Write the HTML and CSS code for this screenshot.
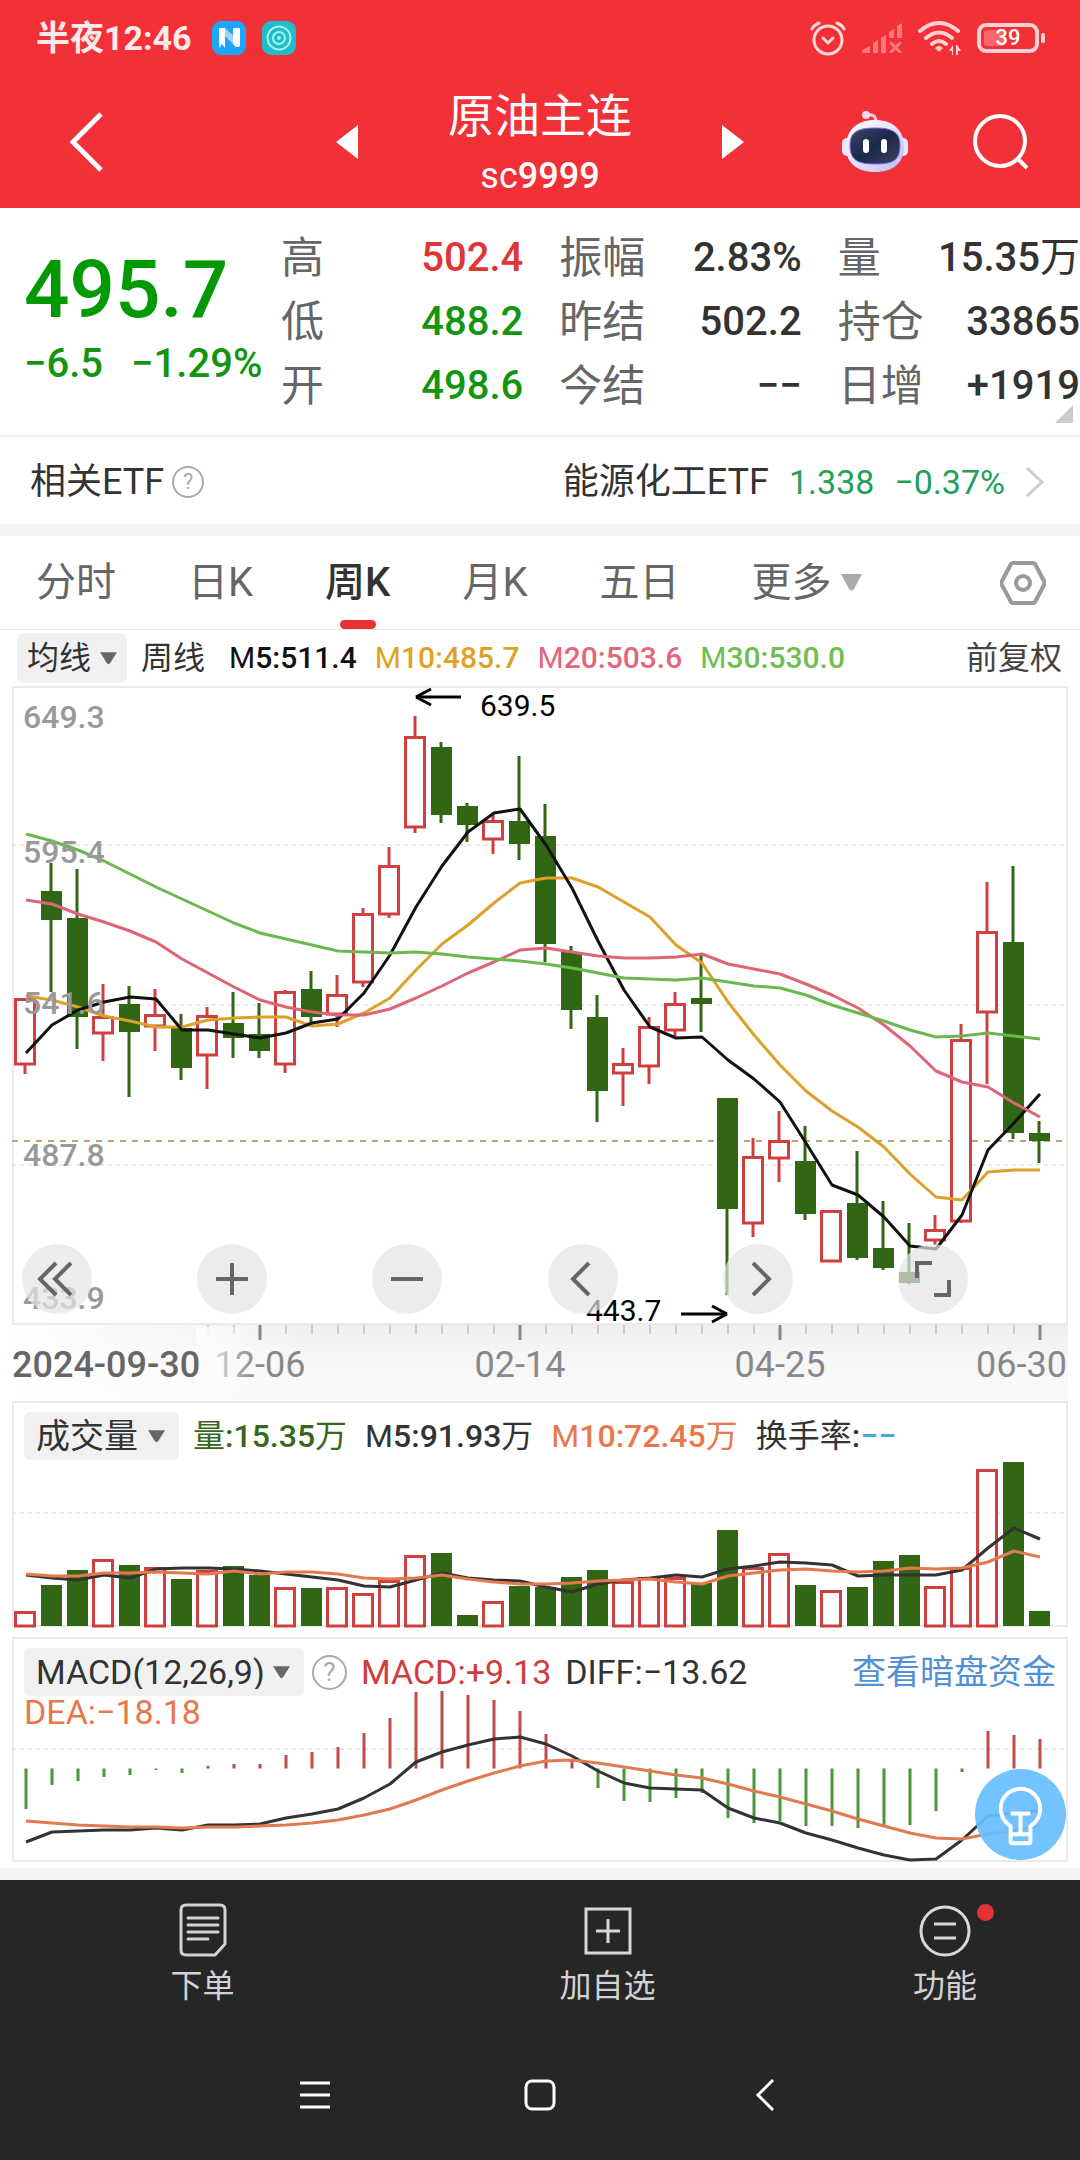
FILE: index.html
```html
<!DOCTYPE html>
<html lang="zh-CN">
<head>
<meta charset="utf-8">
<meta name="viewport" content="width=device-width, initial-scale=1">
<title>原油主连 sc9999</title>
<link rel="stylesheet" href="styles.css">
</head>
<body>
<header class="top">
  <div class="status">
    <span class="status-time">半夜12:46</span>
    <svg class="app-icon" viewBox="0 0 34 34" aria-hidden="true"><rect width="34" height="34" rx="9" fill="#1ba5fb"/><path d="M7 8q0-1 1-1h5v20l-3-4-3 4z" fill="#fff"/><path d="M13 7l15 14v3q-1 2-4 2L13 15z" fill="#9fd4fb"/><path d="M21 8q0-1 1-1h5q1 0 1 1v16q0 2-2 2-5 0-5-5z" fill="#fff"/></svg>
    <svg class="app-icon" viewBox="0 0 34 34" aria-hidden="true"><rect width="34" height="34" rx="9" fill="#20bccc"/><g fill="none" stroke="#a5f5ee" stroke-width="2"><circle cx="17" cy="17" r="11.500"/><circle cx="17" cy="17" r="6"/></g><circle cx="17" cy="17" r="2" fill="#a5f5ee"/></svg>
    <span class="spacer"></span>
    <svg class="alarm" viewBox="0 0 36 36" aria-hidden="true"><g fill="none" stroke="#ffd5d6" stroke-width="3" stroke-linecap="round" stroke-linejoin="round"><circle cx="18" cy="20" r="14"/><path d="M13 18l5 5 5-5M2 9q2-4 7-6M34 9q-2-4-7-6"/></g></svg>
    <svg class="signal" viewBox="0 0 40 30" aria-hidden="true"><g fill="#f8797d"><path d="M0 30v-3l8-4v7zM11 30V20l5-3v13zM19 30V15l5-3v18zM27 15V9l5-3v9zM35 15V3l5-3v15z"/></g><path d="M29 20l9 9m0-9l-9 9" stroke="#f8797d" stroke-width="3" stroke-linecap="round"/></svg>
    <svg class="wifi" viewBox="0 0 43 34" aria-hidden="true"><g fill="none" stroke="#ffd0d2" stroke-width="4" stroke-linecap="round"><path d="M2 10q19-16 38 0M8 17q13-11 26 0M14 23q7-6 14 0"/></g><path d="M17 27q4-4 8 0l-4 4z" fill="#ffd0d2"/><path d="M35 34V24l-4 6h3v4zM38 34V24h1l4 6h-3v4z" fill="#ffd0d2"/></svg>
    <span class="battery"><span class="battery-level"></span><span class="battery-text">39</span></span>
  </div>
  <div class="nav">
    <button class="icon-button nav-back" aria-label="返回"><svg width="34" height="60" viewBox="0 0 34 60"><path d="M31 2L3 30l28 28" fill="none" stroke="#fff" stroke-width="5"/></svg></button>
    <div class="nav-title">
      <button class="icon-button" aria-label="上一个"><svg width="22" height="34" viewBox="0 0 22 34"><path d="M22 0v34L0 17z" fill="#fff"/></svg></button>
      <h1 class="title">原油主连<span class="code"><span class="code-prefix">sc</span>9999</span></h1>
      <button class="icon-button" aria-label="下一个"><svg width="22" height="34" viewBox="0 0 22 34"><path d="M0 0v34l22-17z" fill="#fff"/></svg></button>
    </div>
    <div class="nav-actions">
      <button class="icon-button" aria-label="智能助手"><svg width="66" height="62" viewBox="0 0 66 62">
        <defs><linearGradient id="face" x1="0" y1="0" x2="1" y2="1"><stop offset="0" stop-color="#3c4668"/><stop offset=".5" stop-color="#1b2748"/><stop offset="1" stop-color="#3d4464"/></linearGradient><linearGradient id="shell" x1="0" y1="0" x2="1" y2="1"><stop offset="0" stop-color="#fff"/><stop offset=".5" stop-color="#e6e2fa"/><stop offset="1" stop-color="#b9bcf0"/></linearGradient></defs>
        <path d="M24 4q10-2 10 7" fill="none" stroke="#f8c9dc" stroke-width="3"/><circle cx="24" cy="4" r="4" fill="#f3ddec"/>
        <rect x="0" y="27" width="10" height="18" rx="5" fill="#e8e6fb"/><rect x="56" y="27" width="10" height="18" rx="5" fill="#e8e6fb"/>
        <path d="M33 9c18 0 29 10 29 27 0 16-11 25-29 25S4 52 4 36C4 19 15 9 33 9z" fill="url(#shell)"/>
        <path d="M33 17c17 0 25 4 25 17 0 15-6 19-25 19S8 48 8 34c0-13 8-17 25-17z" fill="url(#face)" stroke="#7a6bea"/>
        <rect x="21" y="28" width="6" height="14" rx="3" fill="#fff"/><rect x="39" y="28" width="6" height="14" rx="3" fill="#fff"/></svg></button>
      <button class="icon-button" aria-label="搜索"><svg width="58" height="58" viewBox="0 0 58 58"><g fill="none" stroke="#fff" stroke-width="4"><circle cx="28" cy="28" r="25"/><path d="M45 45l10 10"/></g></svg></button>
    </div>
  </div>
</header>

<main>
  <section class="quote">
    <div class="quote-main">
      <div class="price">495.7</div>
      <div class="change"><span>−6.5</span><span>−1.29%</span></div>
    </div>
    <dl class="stats">
      <div class="stat"><dt>高</dt><dd class="up">502.4</dd></div>
      <div class="stat"><dt>振幅</dt><dd>2.83%</dd></div>
      <div class="stat"><dt>量</dt><dd>15.35<span class="unit">万</span></dd></div>
      <div class="stat"><dt>低</dt><dd class="down">488.2</dd></div>
      <div class="stat"><dt>昨结</dt><dd>502.2</dd></div>
      <div class="stat"><dt>持仓</dt><dd>33865</dd></div>
      <div class="stat"><dt>开</dt><dd class="down">498.6</dd></div>
      <div class="stat"><dt>今结</dt><dd>−−</dd></div>
      <div class="stat"><dt>日增</dt><dd>+1919</dd></div>
    </dl>
    <svg class="quote-corner" width="18" height="18" viewBox="0 0 18 18" aria-hidden="true"><path d="M18 0v18H0z" fill="#ccc"/></svg>
  </section>

  <section class="etf">
    <span>相关ETF</span>
    <button class="icon-button help-small" aria-label="说明">?</button>
    <a class="etf-link" href="#etf">
      <span>能源化工ETF</span><span class="etf-value">1.338</span><span class="etf-value">−0.37%</span>
      <svg width="20" height="32" viewBox="0 0 20 32" aria-hidden="true"><path d="M2 2l15 14L2 30" fill="none" stroke="#ccc" stroke-width="3"/></svg>
    </a>
  </section>

  <nav class="tabs">
    <button class="tab">分时</button>
    <button class="tab">日K</button>
    <button class="tab tab-active">周K</button>
    <button class="tab">月K</button>
    <button class="tab">五日</button>
    <label class="tab tab-more"><select class="picker" aria-label="更多周期"><option>更多</option></select><svg width="21" height="17" viewBox="0 0 21 17" aria-hidden="true"><path d="M0 0h21l-8 15q-2 3-5 0z" fill="#aaa"/></svg></label>
    <button class="icon-button tab-settings" aria-label="设置"><svg width="46" height="44" viewBox="0 0 46 44"><g fill="none" stroke="#999" stroke-width="4" stroke-linejoin="round"><path d="M13 2h20q1 0 2 1l9 17q1 2 0 4l-9 17q-1 1-2 1H13q-1 0-2-1L2 24q-1-2 0-4l9-17q1-1 2-1z"/><circle cx="23" cy="22" r="7"/></g></svg></button>
  </nav>

  <div class="ma-row">
    <label class="chip chip-ma"><select class="picker" aria-label="主图指标"><option>均线</option></select><svg class="caret" viewBox="0 0 18 13" aria-hidden="true"><path d="M0 0h18l-7 11q-2 3-4 0z"/></svg></label>
    <span class="ma-period">周线</span>
    <span class="ma c-black"><span class="light">M</span>5:511.4</span>
    <span class="ma c-gold"><span class="light">M</span>10:485.7</span>
    <span class="ma c-pink"><span class="light">M</span>20:503.6</span>
    <span class="ma c-green"><span class="light">M</span>30:530.0</span>
    <button class="icon-button adjust">前复权</button>
  </div>

  <section class="charts">
    <div class="k-chart">
      <svg class="plot" id="kline" viewBox="12 686 1056 639" role="img" aria-label="周K线"></svg>
      <div class="controls">
        <button class="control" aria-label="快退"><svg viewBox="0 0 70 70"><path d="M34 19L18 35l16 16M49 19L33 35l16 16"/></svg></button>
        <button class="control" aria-label="放大"><svg viewBox="0 0 70 70"><path d="M19 35h32M35 19v32"/></svg></button>
        <button class="control" aria-label="缩小"><svg viewBox="0 0 70 70"><path d="M19 35h32"/></svg></button>
        <button class="control" aria-label="左移"><svg viewBox="0 0 70 70"><path d="M41 19L25 35l16 16"/></svg></button>
        <button class="control" aria-label="右移"><svg viewBox="0 0 70 70"><path d="M30 19l16 16-16 16"/></svg></button>
        <button class="control" aria-label="全屏"><svg viewBox="0 0 70 70"><path d="M19 34V19h15M51 36v15H36" stroke-width="4"/></svg></button>
      </div>
    </div>
    <svg class="plot axis" id="axis" viewBox="12 1325 1056 76" role="img" aria-label="日期"></svg>

    <div class="panel">
      <svg class="plot" id="volume" viewBox="12 1401 1056 226" role="img" aria-label="成交量"></svg>
      <div class="panel-head">
        <label class="chip"><select class="picker" aria-label="副图指标一"><option>成交量</option></select><svg class="caret" viewBox="0 0 18 13" aria-hidden="true"><path d="M0 0h18l-7 11q-2 3-4 0z"/></svg></label>
        <span class="vol c-darkgreen"><span class="unit">量</span>:15.35<span class="unit">万</span></span>
        <span class="vol"><span class="light">M</span>5:91.93<span class="unit">万</span></span>
        <span class="vol c-orange"><span class="light">M</span>10:72.45<span class="unit">万</span></span>
        <span class="vol"><span class="unit">换手率</span>:<span class="c-blue">−−</span></span>
      </div>
    </div>

    <div class="panel panel-macd">
      <svg class="plot" id="macd" viewBox="12 1637 1056 225" role="img" aria-label="MACD"></svg>
      <div class="panel-head">
        <label class="chip chip-macd"><select class="picker" aria-label="副图指标二"><option>MACD(12,26,9)</option></select><svg class="caret" viewBox="0 0 18 13" aria-hidden="true"><path d="M0 0h18l-7 11q-2 3-4 0z"/></svg></label>
        <button class="icon-button help" aria-label="说明">?</button>
        <span class="c-red">MACD:+9.13</span>
        <span>DIFF:−13.62</span>
        <a class="fund-link" href="#fund">查看暗盘资金</a>
        <span class="dea c-orange">DEA:−18.18</span>
      </div>
      <button class="icon-button bulb" aria-label="提示"><svg viewBox="0 0 92 92"><circle cx="46" cy="46" r="46" fill="#67beff" fill-opacity=".93"/><g fill="none" stroke="#fff" stroke-width="4" stroke-linejoin="round"><path d="M36 66V58C30 54 26 48 26 40a20 20 0 0 1 40 0c0 8-4 14-10 18v8zM36 66v7q0 2 2 2h16q2 0 2-2v-7M36 45h20M46 45v20"/></g></svg></button>
    </div>
  </section>
</main>

<footer class="bottom">
  <nav class="actions">
    <button class="action"><svg width="48" height="54" viewBox="0 0 48 54"><g fill="none" stroke="#d2d2d2" stroke-width="3" stroke-linecap="round" stroke-linejoin="round"><path d="M7 2h34q5 0 5 5v34L36 52H7q-5 0-5-5V7q0-5 5-5zM9 15h30M9 22h30M9 29h30M9 36h20"/></g></svg>下单</button>
    <button class="action"><svg width="48" height="54" viewBox="0 0 48 54"><path d="M2 6h44v44H2zM12 28h24M24 16v24" fill="none" stroke="#d8d8d8" stroke-width="3"/></svg>加自选</button>
    <button class="action"><svg width="52" height="54" viewBox="0 0 52 54"><g fill="none" stroke="#d8d8d8" stroke-width="3"><circle cx="26" cy="28" r="24"/><path d="M15 21h22M15 35h22"/></g></svg>功能<span class="dot"></span></button>
  </nav>
  <nav class="system">
    <button class="icon-button" aria-label="最近任务"><svg width="32" height="34" viewBox="0 0 32 34"><path d="M1 5h30M1 17h30M1 29h30" stroke="#fff" stroke-width="3"/></svg></button>
    <button class="icon-button" aria-label="主屏幕"><svg width="34" height="34" viewBox="0 0 34 34"><rect x="3" y="3" width="28" height="28" rx="6" fill="none" stroke="#fff" stroke-width="3"/></svg></button>
    <button class="icon-button" aria-label="返回上级"><svg width="20" height="34" viewBox="0 0 20 34"><path d="M18 2L3 17l15 15" fill="none" stroke="#fff" stroke-width="3"/></svg></button>
  </nav>
</footer>
<script src="charts.js"></script>
</body>
</html>
```
FILE: styles.css
```css
* { box-sizing: border-box; }
body {
  margin: 0;
  min-height: 100vh;
  display: flex;
  flex-direction: column;
  background: #fff;
  color: #333;
  font-family: Roboto, "Noto Sans CJK SC", sans-serif;
  font-size: 32px;
  line-height: 1;
}
button, select {
  font: inherit;
  color: inherit;
  background: none;
  border: 0;
  padding: 0;
  margin: 0;
}
svg { display: block; }
.icon-button { display: block; }
.light, .unit { font-weight: 400; }

.top { background: #f13038; color: #fff; }
.status {
  height: 76px;
  padding: 0 36px;
  display: flex;
  align-items: center;
  gap: 16px;
}
.status-time { margin-right: 4px; font-size: 34px; font-weight: 700; color: #ffe9ea; }
.app-icon { width: 34px; height: 34px; }
.spacer { flex: 1; }
.alarm { width: 36px; height: 36px; }
.signal { width: 40px; height: 30px; }
.wifi { width: 43px; height: 34px; }
.battery {
  position: relative;
  width: 62px;
  height: 30px;
  margin-right: 5px;
  border: 4px solid #ffd0d2;
  border-radius: 9px;
  display: grid;
  place-items: center;
}
.battery::after {
  content: "";
  position: absolute;
  right: -10px;
  top: 6px;
  width: 4px;
  height: 10px;
  border-radius: 2px;
  background: #ffd0d2;
}
.battery-level {
  position: absolute;
  left: 3px;
  top: 3px;
  width: 20px;
  height: 16px;
  border-radius: 3px;
  background: #f8666c;
}
.battery-text { position: relative; font-size: 22px; font-weight: 500; }

.nav {
  height: 132px;
  padding: 0 50px 0 70px;
  display: grid;
  grid-template-columns: 1fr auto 1fr;
  align-items: center;
}
.nav-title { display: flex; align-items: center; gap: 90px; margin-left: -20px; }
.title {
  margin: 0;
  padding-top: 8px;
  font-size: 46px;
  font-weight: 400;
  line-height: 60px;
  display: flex;
  flex-direction: column;
  align-items: center;
}
.code { font-size: 36px; font-weight: 500; }
.code-prefix { font-weight: 400; }
.nav-actions { display: flex; justify-content: flex-end; align-items: center; gap: 64px; }

.quote {
  position: relative;
  display: grid;
  grid-template-columns: 281px 1fr;
  height: 229px;
  border-bottom: 2px solid #eee;
}
.quote-main { padding: 42px 0 0 24px; color: #039903; font-weight: 500; white-space: nowrap; }
.price { font-size: 80px; line-height: 80px; }
.change { display: flex; gap: 28px; font-size: 40px; line-height: 68px; color: #13950f; }
.stats {
  margin: 0;
  padding-top: 18px;
  display: grid;
  grid-template-columns: repeat(3, 1fr);
  grid-auto-rows: 64px;
  column-gap: 36px;
}
.stat { display: flex; justify-content: space-between; align-items: center; white-space: nowrap; }
.stat dt { font-size: 43px; color: #666; }
.stat dd { margin: 0; font-size: 40px; font-weight: 500; }
.stat .up { color: #e03535; }
.stat .down { color: #13950f; }
.quote-corner { position: absolute; right: 7px; bottom: 12px; }

.etf {
  height: 87px;
  padding: 2px 35px 0 30px;
  display: flex;
  align-items: center;
  gap: 8px;
  font-size: 36px;
}
.help-small, .help {
  width: 32px;
  height: 32px;
  border: 2px solid #aaa;
  border-radius: 50%;
  color: #aaa;
  font-size: 22px;
}
.etf-link { margin-left: auto; display: flex; align-items: center; gap: 20px; color: inherit; text-decoration: none; }
.etf-value { font-size: 34px; color: #22a05a; }

.tabs {
  border-top: 12px solid #f4f4f4;
  border-bottom: 1px solid #e5e5e5;
  height: 106px;
  padding: 0 34px 0 36px;
  display: flex;
  align-items: stretch;
  gap: 72px;
  font-size: 40px;
  color: #666;
}
.tab { position: relative; }
.tab-active { color: #333; font-weight: 500; }
.tab-active::after {
  content: "";
  position: absolute;
  left: 50%;
  bottom: 0;
  width: 36px;
  height: 9px;
  margin-left: -18px;
  border-radius: 5px;
  background: #e63232;
}
.picker { appearance: none; display: block; }
.tab-more { display: flex; align-items: center; gap: 9px; }
.tab-settings { margin-left: auto; }

.ma-row {
  height: 56px;
  padding: 0 18px 0 17px;
  display: flex;
  align-items: center;
  gap: 18px;
  white-space: nowrap;
}
.chip {
  display: flex;
  align-items: center;
  gap: 10px;
  height: 48px;
  padding: 0 14px 0 12px;
  border-radius: 6px;
  background: #f1f1f1;
  font-size: 34px;
}
.chip-ma { height: 50px; gap: 8px; padding: 0 10px; font-size: 32px; }
.caret { width: 17px; height: 13px; fill: #666; }
.ma-period { margin: 0 6px 0 -4px; }
.ma { font-size: 30px; font-weight: 500; }
.adjust { margin-left: auto; color: #444; }

.c-black { color: #111; }
.c-gold { color: #dfa125; }
.c-pink { color: #e4667a; }
.c-green { color: #6fbe4f; }
.c-darkgreen { color: #35681c; }
.c-orange { color: #e8784a; }
.c-blue { color: #45a8e4; }
.c-red { color: #d33a3a; }

.charts { padding: 0 12px 6px; }
.k-chart { position: relative; }
.plot { width: 100%; height: auto; overflow: visible; }
.controls {
  position: absolute;
  left: 10px;
  right: 100px;
  bottom: 11px;
  display: flex;
  justify-content: space-between;
}
.control {
  width: 70px;
  height: 70px;
  border-radius: 50%;
  background: rgba(228, 228, 228, 0.7);
}
.control path { fill: none; stroke: #666; stroke-width: 4px; }
.axis { background: linear-gradient(to right, #fff, rgba(255, 255, 255, 0) 30%), linear-gradient(#eee, #f6f6f6 40%, #fafafa); }

.panel { position: relative; display: grid; }
.panel > .plot, .panel-head { grid-area: 1 / 1; }
.panel-macd { margin-top: 10px; }
.panel-head {
  align-self: start;
  padding: 11px 12px 0;
  display: flex;
  flex-wrap: wrap;
  align-items: center;
  column-gap: 14px;
  font-size: 34px;
  white-space: nowrap;
}
.vol { font-size: 32px; font-weight: 500; margin-right: 4px; }
.chip-macd { gap: 8px; margin-right: -6px; }
.help { width: 35px; height: 35px; font-size: 26px; }
.fund-link { margin-left: auto; color: #528fd6; text-decoration: none; }
.dea { flex-basis: 100%; line-height: 32px; }
.bulb { position: absolute; right: 2px; bottom: 2px; width: 91px; height: 91px; }

.bottom {
  flex: 1;
  border-top: 12px solid #f4f4f4;
  background: #262626;
  color: #d2d2d2;
}
.actions { display: grid; grid-template-columns: 3fr 3fr 2fr; height: 150px; }
.action {
  position: relative;
  display: flex;
  flex-direction: column;
  align-items: center;
  gap: 12px;
  padding-top: 23px;
  line-height: 34px;
}
.dot {
  position: absolute;
  left: 50%;
  top: 24px;
  width: 17px;
  height: 17px;
  margin-left: 32px;
  border-radius: 50%;
  background: #e63232;
}
.system { display: grid; grid-template-columns: repeat(3, 225px); justify-content: center; justify-items: center; align-items: center; height: 130px; }
```
FILE: charts.js
```js
// Forty weekly bars; x grows by one slot per bar, y values are plot coordinates.
const X0 = 25, SLOT = 26;
const RED = '#cf3f3f', GREEN = '#306614', FRAME = '#eaeaea';
const x = i => X0 + i * SLOT;

// [r|g, high, body top, body bottom, low]
const candles = [
['r',998,998,1064,1074],['g',863,891,920,992],['g',869,918,1017,1049],['r',984,1016,1033,1061],['g',986,1004,1032,1097],
['r',989,1014,1026,1051],['g',1014,1028,1068,1080],['r',1007,1015,1055,1089],['g',992,1023,1038,1058],['g',1003,1034,1051,1058],
['r',990,991,1064,1073],['g',971,989,1017,1022],['r',975,994,1014,1027],['r',908,913,982,987],['r',847,865,914,918],
['r',716,736,827,833],['g',742,747,815,823],['g',803,806,825,842],['r',815,820,839,854],['g',756,821,844,860],
['g',804,836,944,962],['g',946,952,1010,1029],['g',995,1017,1091,1122],['r',1048,1063,1073,1106],['r',1017,1026,1066,1084],
['r',992,1003,1030,1037],['g',955,998,1004,1032],['g',1098,1098,1209,1295],['r',1138,1156,1223,1237],['r',1111,1140,1158,1182],
['g',1126,1161,1214,1220],['r',1210,1210,1261,1261],['g',1151,1203,1258,1260],['g',1201,1248,1268,1270],['g',1223,1272,1283,1284],
['r',1215,1229,1240,1245],['r',1024,1039,1221,1223],['r',882,931,1012,1084],['g',866,942,1133,1139],['g',1121,1133,1141,1163]];
const ma5 = [1053,1025,1010,1002,997,999,1030,1030,1034,1038,1033,1023,1019,993,955,907,866,832,813,809,845,888,941,990,1027,1038,1037,1060,1079,1102,1143,1185,1195,1217,1246,1249,1215,1150,1123,1094];
const ma10 = [996,1000,1007,1016,1021,1027,1027,1020,1018,1017,1017,1026,1024,1013,998,970,944,925,903,883,878,878,887,902,917,945,963,1002,1035,1065,1091,1111,1127,1147,1174,1197,1200,1172,1170,1170];
const ma20 = [900,904,914,922,931,942,959,973,987,1000,1007,1012,1015,1015,1009,998,986,973,962,950,948,952,956,958,958,957,954,964,969,974,984,995,1008,1025,1046,1071,1082,1087,1103,1117];
const ma30 = [834,841,850,861,874,887,899,911,923,933,939,945,951,952,953,952,954,957,959,961,964,968,973,978,979,980,978,982,986,988,995,1005,1013,1021,1030,1037,1036,1033,1036,1039];
const vol = [1611,1585,1570,1559,1565,1567,1579,1570,1566,1575,1587,1588,1587,1593,1580,1555,1553,1615,1601,1586,1587,1577,1570,1581,1577,1577,1583,1530,1567,1553,1585,1590,1587,1561,1555,1586,1567,1469,1462,1611];
const vol5 = [1575,1578,1580,1575,1578,1569,1568,1568,1569,1571,1574,1577,1580,1586,1587,1580,1573,1578,1580,1581,1587,1592,1584,1580,1578,1575,1577,1569,1566,1562,1563,1565,1576,1575,1575,1575,1570,1548,1528,1539];
const vol10 = [1574,1576,1576,1573,1573,1572,1573,1574,1571,1574,1572,1572,1574,1578,1579,1578,1575,1579,1582,1584,1584,1583,1581,1580,1579,1582,1584,1576,1573,1570,1569,1571,1572,1571,1568,1569,1568,1562,1551,1557];
const hist = [1809,1785,1781,1777,1775,1770,1773,1766,1764,1764,1755,1752,1747,1733,1718,1692,1691,1695,1700,1711,1734,1761,1788,1801,1802,1798,1793,1818,1823,1821,1826,1826,1828,1825,1825,1811,1772,1731,1735,1739];
const diff = [1842,1832,1831,1830,1830,1828,1830,1825,1825,1824,1818,1814,1809,1798,1784,1762,1752,1745,1739,1737,1744,1756,1771,1783,1788,1789,1790,1808,1818,1823,1833,1840,1848,1855,1860,1859,1840,1816,1813,1811];
const dea = [1821,1823,1825,1826,1827,1827,1828,1827,1827,1826,1825,1823,1820,1815,1809,1800,1790,1781,1773,1766,1761,1760,1763,1767,1771,1775,1778,1784,1791,1797,1804,1811,1819,1826,1833,1838,1839,1834,1830,1826];

const curve = (ys, color) => `<polyline fill="none" stroke="${color}" stroke-width="3" stroke-linejoin="round" points="${ys.map((y, i) => (x(i) + 1) + ',' + y).join(' ')}"/>`;
const line = (x1, y1, x2, y2, color, w, extra = '') => `<path d="M${x1} ${y1}L${x2} ${y2}" stroke="${color}" stroke-width="${w}" fill="none" ${extra}/>`;
const text = (tx, ty, s, size, color, extra = '') => `<text x="${tx}" y="${ty}" font-size="${size}" fill="${color}" ${extra}>${s}</text>`;
const frame = (top, h) => `<rect x="13" y="${top + 1}" width="1054" height="${h - 2}" fill="none" stroke="${FRAME}" stroke-width="2"/>`;
const grid = y => line(12, y, 1066, y, '#e3e3e3', 1.5, 'stroke-dasharray="4 4"');
const bar = (i, kind, top, bottom, w) => kind === 'g'
  ? `<rect x="${x(i) - 10}" y="${top}" width="21" height="${Math.max(bottom - top, 2)}" fill="${GREEN}"/>`
  : `<rect x="${x(i) - 11 + w / 2}" y="${top + w / 2}" width="${22 - w}" height="${bottom - top - w / 2}" fill="#fff" stroke="${RED}" stroke-width="${w}"/>`;

document.getElementById('kline').innerHTML =
  frame(686, 639) + [845, 1005, 1165].map(grid).join('') +
  line(12, 1141, 1064, 1141, '#c3a271', 2, 'stroke-dasharray="6 6"') +
  candles.map(([k, hi, top, bot, lo], i) =>
    line(x(i), hi, x(i), lo, k === 'g' ? GREEN : RED, 3) + bar(i, k, top, bot, 3)).join('') +
  curve(ma10, '#dca02b') + curve(ma5, '#111') + curve(ma20, '#df6474') + curve(ma30, '#6bb84e') +
  [[728, '649.3'], [863, '595.4'], [1014, '541.6'], [1166, '487.8'], [1309, '433.9']]
    .map(([y, s]) => text(23, y, s, 32, '#999', 'font-weight="500"')).join('') +
  line(416, 697, 461, 697, '#000', 3) + line(431, 689, 416, 697, '#000', 3) + line(416, 697, 431, 705, '#000', 3) +
  text(480, 716, '639.5', 30, '#000') +
  line(681, 1314, 727, 1314, '#000', 3) + line(712, 1306, 727, 1314, '#000', 3) + line(727, 1314, 712, 1322, '#000', 3) +
  text(586, 1321, '443.7', 30, '#000');

let ticks = '';
for (let i = 7; i < 40; i++) {
  const major = i % 10 === 9;
  ticks += line(x(i) + 1, 1325, x(i) + 1, major ? 1340 : 1334, major ? '#888' : '#aaa', major ? 3 : 1);
}
document.getElementById('axis').innerHTML =
  '<defs><linearGradient id="fade"><stop offset="0" stop-color="#fdfdfd"/><stop offset="1" stop-color="#fff" stop-opacity="0"/></linearGradient></defs>' +
  ticks + text(260, 1377, '12-06', 36, '#888', 'text-anchor="middle"') + text(520, 1377, '02-14', 36, '#888', 'text-anchor="middle"') +
  text(780, 1377, '04-25', 36, '#888', 'text-anchor="middle"') + text(1067, 1377, '06-30', 36, '#888', 'text-anchor="end"') +
  '<rect x="196" y="1327" width="60" height="60" fill="url(#fade)"/>' +
  text(12, 1377, '2024-09-30', 36, '#666', 'font-weight="500"');

document.getElementById('volume').innerHTML =
  frame(1401, 226) + grid(1513) + vol.map((y, i) => bar(i, candles[i][0], y, 1626, 3)).join('') +
  curve(vol5, '#333') + curve(vol10, '#e5794c');

document.getElementById('macd').innerHTML =
  frame(1637, 225) + grid(1749) +
  hist.map((y, i) => line(x(i) + 1, 1768.5, x(i) + 1, y, y > 1768 ? '#4a963a' : '#bf4a4a', 3)).join('') +
  curve(diff, '#333') + curve(dea, '#e07a50');
```
